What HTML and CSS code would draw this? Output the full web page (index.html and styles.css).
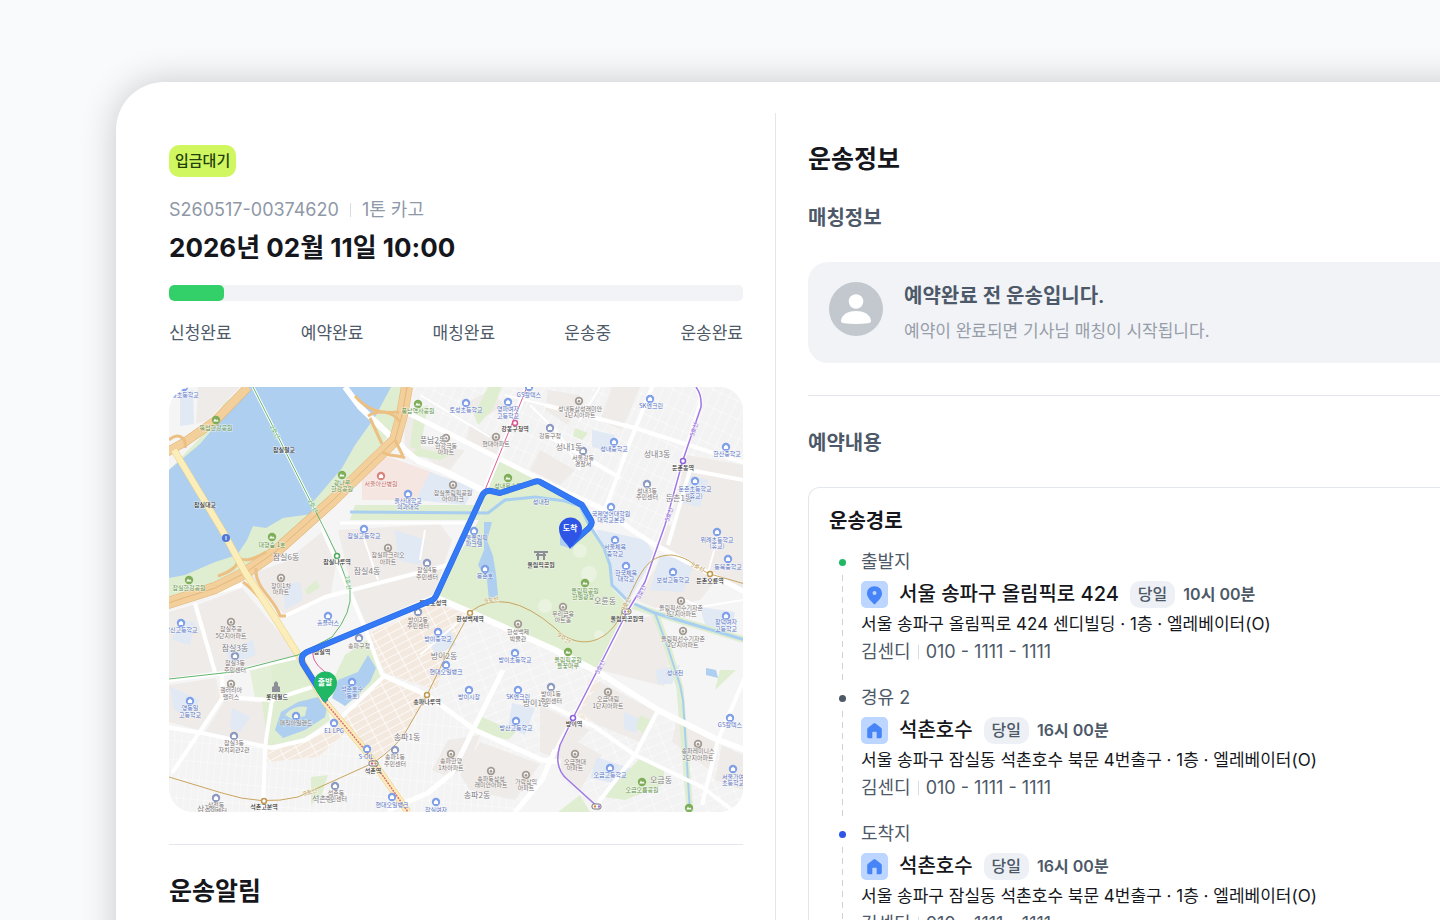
FILE: index.html
```html
<!DOCTYPE html>
<html lang="ko">
<head>
<meta charset="utf-8">
<meta name="viewport" content="width=device-width, initial-scale=1">
<title>운송정보</title>
<link rel="stylesheet" href="styles.css">
</head>
<body>
<svg width="0" height="0" class="defs" aria-hidden="true">
  <symbol id="ic-pin" viewBox="0 0 27 27"><path d="M13.500 5.200c-4.200 0-7.500 3.100-7.500 7.200 0 4.300 4 7.300 6.700 10.500.4.500 1.200.5 1.600 0 2.700-3.200 6.700-6.200 6.700-10.500 0-4.100-3.300-7.200-7.500-7.200z" fill="#4684f7"/><circle cx="13.500" cy="12" r="2" fill="#bcd6ff"/></symbol>
  <symbol id="ic-home" viewBox="0 0 27 27"><path d="M12.500 6.600 7 10.700c-.5.400-.8.900-.8 1.500v7.600c0 .9.600 1.400 1.400 1.400h3.700v-5.400c0-.6.400-1 1-1h2.400c.6 0 1 .4 1 1v5.400h3.700c.8 0 1.400-.5 1.400-1.400v-7.600c0-.6-.3-1.100-.8-1.500l-5.500-4.100c-.6-.5-1.400-.5-2 0z" fill="#4684f7"/></symbol>
  <symbol id="poi" viewBox="0 0 10 10" overflow="visible"><circle cx="5" cy="5" r="4.200"/><path d="M5 2.700 2.900 4.500v2.600h4.200V4.500z" fill="#fff"/></symbol>
  <symbol id="apt" viewBox="0 0 10 10" overflow="visible"><circle cx="5" cy="5" r="4.200"/><circle cx="5" cy="5" r="2.400" fill="#fff"/><path d="M5 3.400 3.600 4.700v1.800h2.800V4.700z" fill="#a29a92"/></symbol>
  <symbol id="tree" viewBox="0 0 10 10" overflow="visible"><circle cx="5" cy="5" r="4.200"/><path d="M2.300 6.500 4 3.500l1.200 2 .9-1.200 1.600 2.200z" fill="#fff"/></symbol>
</svg>
<main class="card">
  <section class="pane summary">
    <span class="badge">입금대기</span>
    <p class="meta"><span>S260517-00374620</span><i class="bar"></i><span>1톤 카고</span></p>
    <h1 class="date">2026년 02월 11일 10:00</h1>
    <progress class="progress" value="96" max="1000" aria-label="운송 진행"></progress>
    <ol class="steps"><li>신청완료</li><li>예약완료</li><li>매칭완료</li><li>운송중</li><li>운송완료</li></ol>

    <svg class="map" viewBox="169 387 574 425" preserveAspectRatio="xMidYMid slice" role="img" aria-label="운송 경로 지도">
      <defs>
        <pattern id="g1" width="16" height="9" patternUnits="userSpaceOnUse" patternTransform="rotate(-22)"><rect width="16" height="9" fill="#f4f3f3"/><path d="M0 0H16M0 0V9" stroke="#e4e3e3" stroke-width="2"/><path d="M0 0H16M0 0V9" stroke="#fff" stroke-width="1.500"/></pattern>
        <pattern id="g2" width="15" height="7" patternUnits="userSpaceOnUse" patternTransform="rotate(-28)"><rect width="15" height="7" fill="#f3e9df"/><path d="M0 0H15M0 0V7" stroke="#fff" stroke-width="1.500"/></pattern>
        <pattern id="g3" width="9" height="17" patternUnits="userSpaceOnUse" patternTransform="rotate(25)"><rect width="9" height="17" fill="#f4f3f3"/><path d="M0 0H9M0 0V17" stroke="#e4e3e3" stroke-width="2"/><path d="M0 0H9M0 0V17" stroke="#fff" stroke-width="1.500"/></pattern>
        <pattern id="g4" width="7" height="19" patternUnits="userSpaceOnUse" patternTransform="rotate(5)"><rect width="7" height="19" fill="#f5f4f4"/><path d="M0 0H7M0 0V19" stroke="#e6e5e5" stroke-width="2"/><path d="M0 0H7M0 0V19" stroke="#fff" stroke-width="1.500"/></pattern>
      </defs>
      <rect x="169" y="387" width="574" height="425" fill="#f5f5f5"/>

      <g>
        <path d="M408 387H743V590L632 530 605 510 555 487 502 460 408 413z" fill="url(#g3)"/>
        <path d="M169 727 265 748 305 740 338 720 382 678 427 695 475 730 542 760 515 812H169z" fill="url(#g4)"/>
        <path d="M367 628 436 600 470 612 555 650 598 672 570 718 558 765 475 730 427 695 385 673z" fill="url(#g1)"/>
        <path d="M598 672 658 710 743 750V812H597L560 778 573 718z" fill="url(#g1)"/>
        <path d="M400 620 430 603 465 613 448 656 436 690 385 673 367 634z" fill="url(#g2)"/>
        <path d="M340 722 385 677 427 696 405 733 375 762z" fill="url(#g2)"/>
        <path d="M268 748 305 742 338 724 345 733 318 757 267 762zM590 678 608 686 588 722 574 716z" fill="url(#g2)"/>
      </g>
      <g fill="#efebe8">
        <path d="M195 606 242 588 298 655 232 671 216 672zM247 575 285 562 322 532 338 553 330 597 284 614zM338 530 440 524 452 540 434 594 366 624 352 590z"/>
        <path d="M198 387 240 387 208 420 196 424zM404 420 418 410 415 465 405 448zM410 445 465 450 450 470 440 468zM470 425 505 442 497 458 465 445zM463 405 490 390 505 405 480 420z"/>
        <path d="M169 612 193 605 213 672 169 678zM169 685 216 678 220 698 202 731 169 722zM225 700 270 703 264 745 205 732z"/>
        <path d="M686 455 743 465V588L668 545zM640 387 622 430 600 420 612 387zM548 390 580 395 568 425 545 410zM540 450 575 470 560 485 530 470z"/>
        <path d="M665 525 743 530V590L656 545zM660 560 720 575 700 600 655 608 636 600zM618 622 658 615 678 690 600 670zM600 682 657 712 640 742 598 725 580 712z"/>
        <path d="M448 740 480 735 470 762 450 778 432 770zM480 742 540 764 515 800 470 790 460 775zM565 735 602 755 580 790 560 772zM680 705 717 740 710 770 672 742z"/>
        <path d="M540 705 590 730 560 760 540 752zM722 745 743 755V790L715 780z"/>
      </g>
      <path d="M678 618 743 642V676L718 738 660 708z" fill="#f5f5f5"/>
      <path d="M362 480 378 455 392 458 434 473 415 500 362 500z" fill="#f5e6e1"/>
      <g fill="#e1e9f4">
        <path d="M180 392 193 390 194 424 180 426zM430 472 475 488 465 505 416 500zM592 430 615 435 612 452 592 447zM283 585 300 582 303 600 285 610zM225 650 253 640 256 655 232 664zM180 620 195 622 190 645 172 640z"/>
        <path d="M600 530 645 540 655 555 628 602 614 588 608 555 596 530zM660 555 695 562 683 592 650 590zM700 607 735 612 730 635 706 628zM597 757 635 770 622 785 590 778zM624 712 642 720 636 733 624 729z"/>
        <path d="M232 708 250 717 240 732 230 728zM512 703 535 708 525 735 508 728zM688 475 708 480 700 507 680 503zM428 640 450 628 456 645 436 655zM395 530 425 540 420 565 398 560zM655 670 680 665 672 684 658 684zM170 687 200 700 190 715 174 710z"/>
      </g>
      <g fill="#dfedd0">
        <path d="M169 470 200 438 225 402 248 387H410L400 420 372 458 331 503 297 528 245 570 215 585 169 603z"/>
        <path d="M435 596 480 518 483 492 500 461 555 488 588 507 594 530 608 552 612 588 629 606 598 671 555 651 470 612z"/>
        <path d="M262 702 271 665 300 658 326 690 345 706 366 690 382 676 367 640 345 655 333 680 326 700 330 720 305 738 268 746z"/>
        <path d="M355 505H480V520H350zM415 410 428 405 420 450 410 447zM440 460 410 455 418 448 450 455zM488 387H502L492 410 478 425 474 415z"/>
        <path d="M473 730 482 717 516 732 508 740zM311 777 328 775 322 795 311 805zM640 758 665 768 662 785 625 800 603 797zM558 812 580 795 590 812zM575 428 588 433 582 440 573 436zM720 670 736 670 715 690zM305 590 316 580 320 587 308 595zM640 715 650 720 643 733 636 728z"/>
      </g>
      <path d="M250 671 271 665 274 700 255 698z" fill="#e4efd8"/>
      <g fill="#aecff0">
        <path d="M169 470 200 444 222 418 249 387H391L375 417 355 445 342 468 313 502 312 514 283 518 266 528 253 526 247 540 237 555 215 562 185 575 169 578z"/>
        <path d="M275 730 281 712 298 702 318 697 327 707 325 717 305 730 283 738z"/>
        <path d="M332 698 338 680 358 672 368 655 376 668 370 682 355 697 345 706z"/>
        <path d="M484 522 492 522 487 540 493 556 496 574 498 595 489 600 487 580 478 565 484 550z"/>
        <path d="M560 535 578 540 572 549 560 545zM706 668 716 670 718 678 706 675z"/>
      </g>
      <path d="M285 715c5-7 15-10 22-8l-2 9-13 3z" fill="#dfedd0"/>
      <g fill="#e9f3df"><circle cx="580" cy="551" r="7"/><circle cx="589" cy="574" r="8"/><circle cx="545" cy="606" r="7"/><circle cx="599" cy="635" r="5"/></g>
      <g fill="none" stroke="#dfedd0" stroke-width="7"><path d="M628 604 655 613 695 625 745 640M655 613 668 648 680 688 690 812"/></g>
      <g fill="none" stroke="#a9cff0" stroke-width="3">
        <path d="M350 512 488 513 505 500 535 497 565 501 580 506 588 523 604 548 610 565 612 585 628 601 655 613 695 625 745 640"/>
        <path d="M655 613 668 648 680 685 683 700 690 812" stroke-width="2"/>
      </g>

      <g fill="none" stroke="#fff" stroke-linejoin="round">
        <path d="M345 387 360 407 405 450 418 461 442 470 482 490" stroke-width="6"/>
        <path d="M408 413 502 460 555 487 605 510 632 530 655 545 745 592" stroke-width="5"/>
        <path d="M435 597 470 612 555 650 598 672 658 710 718 740 745 750" stroke-width="6"/>
        <path d="M527 387 485 490 435 597 367 628 298 655" stroke-width="5"/>
        <path d="M697 387 701 400 683 460 665 525 645 582 627 612 597 672 573 718 547 767" stroke-width="4"/>
        <path d="M652 387 628 447 605 510M545 405 635 428 745 463M545 435 570 448 620 478" stroke-width="4"/>
        <path d="M169 605 242 585M195 603 215 672M283 617 325 597 448 565M322 528 350 592 365 628 382 675" stroke-width="4"/>
        <path d="M382 675 427 695 475 730 542 760 560 762M503 670 473 730 452 773 428 793 388 810M555 750 542 780 515 812" stroke-width="5"/>
        <path d="M165 727 202 733 272 748 305 740 338 720 365 695 384 676M222 675 223 697 172 773M223 697 272 700 312 687M272 700 265 747 263 812M169 680 232 672 298 657" stroke-width="4"/>
        <path d="M545 703 595 727 635 755 702 787 732 810M658 710 635 755 598 803M745 677 718 740 702 805M668 545 690 470 743 480" stroke-width="4"/>
        <path d="M530 405 560 435 580 470M505 395 545 405M420 395 490 437M600 387 580 420M685 600 700 607 743 600M720 530 708 572M425 530 420 560M362 533 378 580M420 655 470 612" stroke-width="2"/>
        <path d="M340 523H465" stroke-width="3"/>
        <path d="M253 387 325 530" stroke-width="3"/>
      </g>
      <g fill="none" stroke-linejoin="round">
        <g stroke="#e2b578">
          <path d="M248 387 215 421 185 442 165 453" stroke-width="9"/>
          <path d="M407 387 402 415 395 440 366 468 332 501 303 527 275 552 245 573 215 588 165 604" stroke-width="12"/>
        </g>
        <g stroke="#f2cf9b">
          <path d="M248 387 215 421 185 442 165 453" stroke-width="8"/>
          <path d="M407 387 402 415 395 440 366 468 332 501 303 527 275 552 245 573 215 588 165 604" stroke-width="11"/>
        </g>
        <path d="M407 387 402 415 395 440 366 468 332 501 303 527 275 552 245 573 215 588 165 604" stroke="#e3b77b" stroke-width="1"/>
        <g stroke="#ecc083" stroke-width="3">
          <path d="M355 396c12 14 24 18 44 16M368 416c10-6 24-6 32 6M370 418l12 26M383 452c4 5 14 2 22 6M395 440l8 16M169 440c8-8 18-3 16 8M238 560c0 6-8 12-20 16M236 556c8 8 20 2 30-4M256 568c-2 20 20 32 24 48h6M243 582c14 10 20 22 32 33"/>
        </g>
        <path d="M174 450 222 530 245 572 275 618 299 656 325 702 365 750 408 812" stroke="#ead183" stroke-width="7"/>
        <path d="M174 450 222 530 245 572 275 618 299 656 325 702 365 750 408 812" stroke="#fbeebb" stroke-width="6"/>
        <path d="M325 702 365 750 408 812" stroke="#e06a7c" stroke-width="1.500" stroke-dasharray="2 1"/>
        <path d="M253 387 325 530 337 555 350 590Q353 612 332 637L298 655 232 672 169 679" stroke="#62b56c" stroke-width="1"/>
        <path d="M527 387 485 490" stroke="#dc5f95" stroke-width="1"/>
        <path d="M325 672Q309 660 314 648" stroke="#dc5f95" stroke-width="1"/>
        <path d="M696 387Q702 395 701 407L683 460 665 525 645 582 627 612 595 675 573 718 560 745Q553 768 568 780L600 809" stroke="#a077e4" stroke-width="1.500"/>
        <path d="M169 777 222 793Q262 806 298 797L373 763Q395 748 405 733L427 695 445 658 470 612Q505 585 555 628C578 652 612 645 625 605 640 575 645 555 672 555 692 558 695 568 710 574L745 584" stroke="#c8a55e" stroke-width="1"/>
      </g>

      <g class="stop-dots" fill="#fff" stroke-width="1.500">
        <circle cx="515" cy="423" r="2.500" stroke="#d6578f"/><circle cx="683" cy="461" r="2.500" stroke="#8d62d8"/><circle cx="573" cy="718" r="2.500" stroke="#8d62d8"/>
        <circle cx="337" cy="556" r="2.500" stroke="#4fab5a"/><circle cx="470" cy="613" r="2.500" stroke="#bd9a50"/><circle cx="427" cy="695" r="2.500" stroke="#bd9a50"/><circle cx="264" cy="801" r="2.500" stroke="#bd9a50"/><circle cx="710" cy="574" r="2.500" stroke="#bd9a50"/>
        <g stroke="#777" stroke-width="1"><rect x="622" y="609" width="9" height="5" rx="2"/><rect x="369" y="761" width="9" height="5" rx="2"/><rect x="592" y="804" width="9" height="5" rx="2"/></g>
      </g>
      <g fill="#a077e4"><circle cx="625" cy="611.500" r="1.200"/><circle cx="372" cy="763.500" r="1.200" fill="#d6578f"/><circle cx="599" cy="806.500" r="1.200"/></g>
      <g fill="#bd9a50"><circle cx="628.500" cy="611.500" r="1.200"/><circle cx="375.500" cy="763.500" r="1.200"/><circle cx="595" cy="806.500" r="1.200" fill="#e08a3c"/></g>
      <circle cx="226" cy="538" r="4" fill="#4f78d8"/><path d="M226 536v4" stroke="#fff"/>
      <path d="M534 552h14M536 555h10M538 552v8M544 552v8" stroke="#8e8e98" stroke-width="2" fill="none"/>
      <path d="M272 692v-5l2-1v-3l2-2 2 2v3l2 1v5z" fill="#8e8e98"/>

      <g fill="#7fae5a">
        <use href="#tree" x="211" y="415" width="10" height="10"/><use href="#tree" x="337" y="470" width="10" height="10"/><use href="#tree" x="413" y="399" width="10" height="10"/><use href="#tree" x="503" y="473" width="10" height="10"/><use href="#tree" x="267" y="532" width="10" height="10"/><use href="#tree" x="184" y="575" width="10" height="10"/><use href="#tree" x="580" y="578" width="10" height="10"/><use href="#tree" x="563" y="647" width="10" height="10"/><use href="#tree" x="637" y="777" width="10" height="10"/><use href="#tree" x="684" y="803" width="10" height="10"/>
      </g>
      <g fill="#a29a92">
        <use href="#apt" x="441" y="433" width="10" height="10"/><use href="#apt" x="491" y="432" width="10" height="10"/><use href="#apt" x="448" y="480" width="10" height="10"/><use href="#apt" x="574" y="396" width="10" height="10"/><use href="#apt" x="276" y="573" width="10" height="10"/><use href="#apt" x="226" y="617" width="10" height="10"/><use href="#apt" x="383" y="543" width="10" height="10"/><use href="#apt" x="513" y="619" width="10" height="10"/><use href="#apt" x="558" y="602" width="10" height="10"/><use href="#apt" x="676" y="596" width="10" height="10"/><use href="#apt" x="678" y="626" width="10" height="10"/><use href="#apt" x="226" y="679" width="10" height="10"/><use href="#apt" x="446" y="749" width="10" height="10"/><use href="#apt" x="486" y="766" width="10" height="10"/><use href="#apt" x="521" y="770" width="10" height="10"/><use href="#apt" x="603" y="687" width="10" height="10"/><use href="#apt" x="570" y="749" width="10" height="10"/><use href="#apt" x="693" y="739" width="10" height="10"/>
      </g>
      <g fill="#7f9fe8">
        <use href="#poi" x="179" y="382" width="10" height="10"/><use href="#poi" x="524" y="382" width="10" height="10"/><use href="#poi" x="461" y="398" width="10" height="10"/><use href="#poi" x="503" y="397" width="10" height="10"/><use href="#poi" x="403" y="489" width="10" height="10"/><use href="#poi" x="645" y="394" width="10" height="10"/><use href="#poi" x="609" y="437" width="10" height="10"/><use href="#poi" x="721" y="442" width="10" height="10"/><use href="#poi" x="690" y="476" width="10" height="10"/><use href="#poi" x="606" y="502" width="10" height="10"/><use href="#poi" x="359" y="524" width="10" height="10"/><use href="#poi" x="469" y="526" width="10" height="10"/><use href="#poi" x="480" y="564" width="10" height="10"/><use href="#poi" x="323" y="611" width="10" height="10"/><use href="#poi" x="176" y="618" width="10" height="10"/><use href="#poi" x="433" y="627" width="10" height="10"/><use href="#poi" x="510" y="648" width="10" height="10"/><use href="#poi" x="441" y="660" width="10" height="10"/><use href="#poi" x="610" y="535" width="10" height="10"/><use href="#poi" x="621" y="561" width="10" height="10"/><use href="#poi" x="668" y="567" width="10" height="10"/><use href="#poi" x="712" y="527" width="10" height="10"/><use href="#poi" x="723" y="554" width="10" height="10"/><use href="#poi" x="721" y="611" width="10" height="10"/><use href="#poi" x="185" y="696" width="10" height="10"/><use href="#poi" x="291" y="711" width="10" height="10"/><use href="#poi" x="347" y="677" width="10" height="10"/><use href="#poi" x="329" y="718" width="10" height="10"/><use href="#poi" x="362" y="744" width="10" height="10"/><use href="#poi" x="464" y="685" width="10" height="10"/><use href="#poi" x="513" y="685" width="10" height="10"/><use href="#poi" x="511" y="716" width="10" height="10"/><use href="#poi" x="387" y="792" width="10" height="10"/><use href="#poi" x="431" y="797" width="10" height="10"/><use href="#poi" x="605" y="763" width="10" height="10"/><use href="#poi" x="725" y="713" width="10" height="10"/><use href="#poi" x="728" y="764" width="10" height="10"/>
      </g>
      <g fill="#8c9ac0">
        <use href="#poi" x="545" y="423" width="10" height="10"/><use href="#poi" x="578" y="446" width="10" height="10"/><use href="#poi" x="642" y="479" width="10" height="10"/><use href="#poi" x="422" y="558" width="10" height="10"/><use href="#poi" x="413" y="607" width="10" height="10"/><use href="#poi" x="354" y="633" width="10" height="10"/><use href="#poi" x="230" y="651" width="10" height="10"/><use href="#poi" x="229" y="731" width="10" height="10"/><use href="#poi" x="211" y="793" width="10" height="10"/><use href="#poi" x="330" y="781" width="10" height="10"/><use href="#poi" x="390" y="745" width="10" height="10"/><use href="#poi" x="546" y="682" width="10" height="10"/>
      </g>
      <g fill="#d9847c"><use href="#poi" x="376" y="471" width="10" height="10"/></g>

      <g class="lb lb-area"><text x="433" y="443">풍남2동</text><text x="569" y="450">성내1동</text><text x="657" y="457">성내3동</text><text x="679" y="501">둔촌1동</text><text x="286" y="560">잠실6동</text><text x="367" y="574">잠실4동</text><text x="235" y="651">잠실3동</text><text x="444" y="659">방이2동</text><text x="605" y="604">오륜동</text><text x="407" y="740">송파1동</text><text x="536" y="706">방이1동</text><text x="477" y="798">송파2동</text><text x="661" y="783">오금동</text><text x="323" y="802">석촌동</text><text x="208" y="812">삼전동</text></g>
      <g class="lb lb-stn"><text x="284" y="452">잠실철교</text><text x="205" y="507">잠실대교</text><text x="515" y="431">강동구청역</text><text x="683" y="470">둔촌동역</text><text x="337" y="564">잠실나루역</text><text x="541" y="567">올림픽공원</text><text x="433" y="605">몽촌토성역</text><text x="470" y="621">한성백제역</text><text x="627" y="621">올림픽공원역</text><text x="710" y="583">둔촌오륜역</text><text x="322" y="654">잠실역</text><text x="277" y="699">롯데월드</text><text x="427" y="704">송파나루역</text><text x="574" y="726">방이역</text><text x="373" y="773">석촌역</text><text x="264" y="809">석촌고분역</text></g>
      <g class="lb lb-park"><text x="216" y="430">뚝섬한강공원</text><text x="342" y="485">광나루</text><text x="342" y="491">한강공원</text><text x="418" y="413">풍납역사공원</text><text x="508" y="488">성내유수지</text><text x="272" y="547">대형숲 1호</text><text x="189" y="590">잠실한강공원</text><text x="585" y="593">올림픽공원</text><text x="583" y="599">한얼광장</text><text x="568" y="662">올림픽공원</text><text x="568" y="668">들꽃마루</text><text x="642" y="792">오금오름공원</text></g>
      <g class="lb lb-blue"><text x="185" y="397">동초등학교</text><text x="466" y="412">토성초등학교</text><text x="508" y="411">영파여자</text><text x="508" y="418">고등학교</text><text x="529" y="397">GS칼텍스</text><text x="408" y="503">울산대학교</text><text x="408" y="509">의과대학</text><text x="651" y="408">SK엔크린</text><text x="614" y="451">성내중학교</text><text x="727" y="456">한산중학교</text><text x="695" y="491">둔촌초등학교</text><text x="695" y="498">(휴교)</text><text x="611" y="516">국제영어대학원</text><text x="611" y="522">대학교본관</text><text x="364" y="538">잠실고등학교</text><text x="474" y="540">서울올림픽</text><text x="474" y="546">파크텔</text><text x="485" y="578">몽촌호</text><text x="328" y="625">홈플러스</text><text x="181" y="632">잠신고등학교</text><text x="438" y="641">방이중학교</text><text x="515" y="662">방이초등학교</text><text x="446" y="674">현대오일뱅크</text><text x="615" y="549">서울체육</text><text x="615" y="556">중학교</text><text x="626" y="575">한국체육</text><text x="626" y="581">대학교</text><text x="673" y="582">보성고등학교</text><text x="717" y="542">위례초등학교</text><text x="717" y="548">(휴교)</text><text x="728" y="569">동북중학교</text><text x="726" y="624">창덕여자</text><text x="726" y="631">고등학교</text><text x="675" y="675">성내천</text><text x="541" y="504">성내천</text><text x="190" y="710">영동일</text><text x="190" y="717">고등학교</text><text x="352" y="691">석촌호수</text><text x="352" y="698">(동호)</text><text x="334" y="733">E1 LPG</text><text x="366" y="759">S-OIL</text><text x="469" y="699">방이시장</text><text x="518" y="699">SK엔크린</text><text x="516" y="730">방산고등학교</text><text x="392" y="807">현대오일뱅크</text><text x="436" y="812">잠실여자</text><text x="610" y="777">오금고등학교</text><text x="730" y="727">GS칼텍스</text><text x="733" y="779">서울가여</text><text x="733" y="785">초등학교</text></g>
      <g class="lb lb-gray"><text x="296" y="725">매직아일랜드</text><text x="446" y="448">한강극동</text><text x="446" y="454">아파트</text><text x="496" y="446">현대아파트</text><text x="453" y="495">잠실올림픽공원</text><text x="453" y="501">아이파크</text><text x="580" y="411">성내동삼성래미안</text><text x="580" y="417">1단지아파트</text><text x="550" y="438">강동구청</text><text x="583" y="460">서울강동</text><text x="583" y="466">경찰서</text><text x="647" y="493">성내3동</text><text x="647" y="499">주민센터</text><text x="281" y="588">장미1차</text><text x="281" y="594">아파트</text><text x="231" y="631">잠실주공</text><text x="231" y="638">5단지아파트</text><text x="388" y="557">잠실파크리오</text><text x="388" y="564">아파트</text><text x="427" y="572">잠실4동</text><text x="427" y="579">주민센터</text><text x="418" y="622">방이2동</text><text x="418" y="628">주민센터</text><text x="359" y="648">송파구청</text><text x="518" y="634">한성백제</text><text x="518" y="641">박물관</text><text x="563" y="616">우리금융</text><text x="563" y="622">아트홀</text><text x="681" y="610">올림픽선수기자촌</text><text x="681" y="616">3단지아파트</text><text x="683" y="641">올림픽선수기자촌</text><text x="683" y="647">2단지아파트</text><text x="235" y="665">잠실3동</text><text x="235" y="672">주민센터</text><text x="231" y="692">갤러리아</text><text x="231" y="699">팰리스</text><text x="234" y="745">잠실3동</text><text x="234" y="752">자치회관2관</text><text x="336" y="795">석촌동</text><text x="336" y="801">주민센터</text><text x="216" y="807">삼전동</text><text x="216" y="813">주민센터</text><text x="395" y="759">송파1동</text><text x="395" y="766">주민센터</text><text x="451" y="763">송파한양</text><text x="451" y="770">1차아파트</text><text x="491" y="781">송파동삼성</text><text x="491" y="787">래미안아파트</text><text x="526" y="784">가락삼익</text><text x="526" y="790">아파트</text><text x="608" y="701">오금대림</text><text x="608" y="708">1단지아파트</text><text x="551" y="696">방이1동</text><text x="551" y="703">주민센터</text><text x="575" y="764">오금현대</text><text x="575" y="770">아파트</text><text x="698" y="753">송파레미니스</text><text x="698" y="760">2단지아파트</text></g>
      <g class="lb lb-red"><text x="381" y="486">서울아산병원</text></g>
      <g class="lb lb-line2"><text transform="translate(273 433) rotate(63)">2호선</text><text transform="translate(311 507) rotate(63)">2호선</text><text transform="translate(346 583) rotate(80)">2호선</text></g>
      <g class="lb lb-line5"><text transform="translate(696 430) rotate(-72)">5호선</text><text transform="translate(671 515) rotate(-72)">5호선</text><text transform="translate(643 593) rotate(-62)">5호선</text><text transform="translate(602 668) rotate(-62)">5호선</text></g>
      <g class="lb lb-line9"><text transform="translate(492 602) rotate(-10)">9호선</text><text transform="translate(563 640) rotate(35)">9호선</text><text transform="translate(628 605) rotate(-60)">9호선</text><text transform="translate(697 569) rotate(25)">9호선</text><text transform="translate(311 794) rotate(-15)">9호선</text></g>

      <g fill="none" stroke-linejoin="round" stroke-linecap="round">
        <path d="M325 699 303 664Q299 656 307 652L430 601Q434 600 436 596L482 496Q485 490 491 491L500 493 534 482Q538 480 542 483L582 505 591 520Q593 524 589 528L571 544" stroke="#2b69dc" stroke-width="6"/>
        <path d="M325 699 303 664Q299 656 307 652L430 601Q434 600 436 596L482 496Q485 490 491 491L500 493 534 482Q538 480 542 483L582 505 591 520Q593 524 589 528L571 544" stroke="#3479f6" stroke-width="5"/>
      </g>
      <path d="M570 549C567 543 559 538 559 529a11.500 11.500 0 0 1 23 0C582 538 573 543 570 549z" fill="#2f55e6"/>
      <path d="M325 703C322 697 314 692 314 683a11.500 11.500 0 0 1 23 0C337 692 328 697 325 703z" fill="#20b765"/>
      <g class="pin-text"><text x="570" y="531">도착</text><text x="325" y="685">출발</text></g>
    </svg>

    <hr class="rule">
    <h2 class="title">운송알림</h2>
  </section>

  <section class="pane info">
    <h2 class="title">운송정보</h2>
    <h3 class="sub">매칭정보</h3>
    <div class="notice">
      <svg class="avatar" viewBox="0 0 54 54" aria-hidden="true"><circle cx="27" cy="27" r="27" fill="#c2c8ce"/><circle cx="27" cy="19.500" r="7.300" fill="#fff"/><path d="M12 38.500c1-6.500 8-9.500 15-9.500s14 3 15 9.500c.2 1.700-1 2.500-3 2.800-7.500 1-16.500 1-24 0-2-.3-3.200-1.100-3-2.800z" fill="#fff"/></svg>
      <div>
        <p class="notice-title">예약완료 전 운송입니다.</p>
        <p class="notice-text">예약이 완료되면 기사님 매칭이 시작됩니다.</p>
      </div>
    </div>
    <hr class="rule">
    <h3 class="sub">예약내용</h3>
    <article class="route">
      <h4 class="route-title">운송경로</h4>
      <ol class="stops">
        <li class="stop start">
          <p class="label">출발지</p>
          <div class="place"><svg class="ic" aria-hidden="true"><use href="#ic-pin"/></svg><strong>서울 송파구 올림픽로 424</strong><span class="pill">당일</span><time>10시 00분</time></div>
          <p class="addr">서울 송파구 올림픽로 424 센디빌딩 · 1층 · 엘레베이터(O)</p>
          <p class="contact"><span>김센디</span><i class="bar"></i><span>010 - 1111 - 1111</span></p>
        </li>
        <li class="stop via">
          <p class="label">경유 2</p>
          <div class="place"><svg class="ic" aria-hidden="true"><use href="#ic-home"/></svg><strong>석촌호수</strong><span class="pill">당일</span><time>16시 00분</time></div>
          <p class="addr">서울 송파구 잠실동 석촌호수 북문 4번출구 · 1층 · 엘레베이터(O)</p>
          <p class="contact"><span>김센디</span><i class="bar"></i><span>010 - 1111 - 1111</span></p>
        </li>
        <li class="stop end">
          <p class="label">도착지</p>
          <div class="place"><svg class="ic" aria-hidden="true"><use href="#ic-home"/></svg><strong>석촌호수</strong><span class="pill">당일</span><time>16시 00분</time></div>
          <p class="addr">서울 송파구 잠실동 석촌호수 북문 4번출구 · 1층 · 엘레베이터(O)</p>
          <p class="contact"><span>김센디</span><i class="bar"></i><span>010 - 1111 - 1111</span></p>
        </li>
      </ol>
    </article>
  </section>
</main>
</body>
</html>
```
FILE: styles.css
```css
* { box-sizing: border-box; }
body {
  margin: 0;
  height: 100vh;
  overflow: hidden;
  background: #f8fafc;
  color: #15171c;
  font-family: Inter, "Noto Sans CJK KR", sans-serif;
  font-size: 18px;
  line-height: 28px;
}
h1, h2, h3, h4, p, ol { margin: 0; padding: 0; }
ol { list-style: none; }
.defs { display: block; width: 0; height: 0; }

.card {
  display: grid;
  grid-template-columns: 165fr 181fr;
  margin: 82px -60px 0 116px;
  padding-top: 31px;
  min-height: 100vh;
  background: #fff;
  border-radius: 48px 0 0 0;
  box-shadow: 0 0 36px rgba(0, 0, 0, 0.2);
}
.pane { min-width: 0; display: flex; flex-direction: column; padding-top: 28px; }
.summary { padding-left: 53px; padding-right: 32px; border-right: 1px solid #e3e6ea; padding-top: 32px; }
.info { padding-left: 32px; }

.badge {
  align-self: flex-start;
  padding: 0 6px;
  border-radius: 10px;
  background: #d0f760;
  color: #22400c;
  font-size: 15px;
  font-weight: 500;
  line-height: 32px;
}
.meta { display: flex; align-items: center; gap: 11px; margin-top: 19px; color: #8f98a6; }
.bar { width: 1px; height: 14px; background: #d9dde3; }
.date { margin-top: 6px; font-size: 26px; font-weight: 700; line-height: 36px; }
.progress {
  appearance: none;
  display: block;
  width: 100%;
  height: 16px;
  margin-top: 19px;
  border: 0;
  border-radius: 5px;
  overflow: hidden;
  background: #f1f3f6;
}
.progress::-webkit-progress-bar { background: #f1f3f6; border-radius: 5px; }
.progress::-webkit-progress-value { background: #33d06a; border-radius: 5px; }
.steps { display: flex; justify-content: space-between; margin-top: 18px; color: #4d5968; font-size: 17px; }
.map { display: block; width: 100%; aspect-ratio: 574 / 425; margin-top: 40px; border-radius: 24px; }
.rule { width: 100%; height: 1px; margin: 32px 0 0; border: 0; background: #e3e6ea; flex: none; }
.title { font-size: 25px; font-weight: 700; line-height: 36px; }
.summary .title { margin-top: 28px; }

.sub { margin-top: 27px; color: #4d5968; font-size: 20px; font-weight: 600; line-height: 28px; }
.notice {
  display: flex;
  align-items: flex-start;
  gap: 21px;
  margin-top: 30px;
  padding: 20px 21px 18px;
  border-radius: 20px 0 0 20px;
  background: #f1f3f6;
}
.avatar { width: 54px; height: 54px; flex: none; }
.notice-title { color: #4d5968; font-size: 20px; font-weight: 600; }
.notice-text { margin-top: 7px; color: #979eaa; font-size: 17px; }
.info .rule + .sub { margin-top: 33px; }

.route { margin-top: 30px; padding: 19px 20px; border: 1px solid #e3e6ea; border-right: 0; border-radius: 12px 0 0 0; }
.route-title { font-size: 20px; font-weight: 700; }
.stop { position: relative; padding: 0 0 18px 32px; }
.stops { padding-top: 13px; }
.stop::before {
  content: "";
  position: absolute;
  left: 10px;
  top: 11px;
  width: 7px;
  height: 7px;
  border-radius: 50%;
  background: #4d5968;
}
.stop::after {
  content: "";
  position: absolute;
  left: 13px;
  top: 27px;
  bottom: -1px;
  width: 1px;
  background: repeating-linear-gradient(#cdd2d8 0 6px, transparent 6px 11px);
}
.start::before { background: #20b765; }
.end::before { background: #2f55e6; }
.label { color: #4d5968; }
.place { display: flex; align-items: center; gap: 8px; margin-top: 4px; height: 28px; }
.ic { width: 27px; height: 27px; border-radius: 5px; background: #bcd6ff; }
.place strong { margin: 0 3px; font-size: 20px; font-weight: 500; }
.pill { padding: 0 8px; border-radius: 10px; background: #edf0f5; color: #4d5968; font-size: 16px; font-weight: 500; line-height: 27px; }
.place time { color: #4d5968; font-size: 16px; font-weight: 600; }
.addr { margin-top: 2px; font-size: 17px; }
.contact { display: flex; align-items: center; gap: 7px; color: #4d5968; }

.lb { font-family: "Noto Sans CJK KR", sans-serif; text-anchor: middle; paint-order: stroke; stroke: rgba(255, 255, 255, 0.7); stroke-width: 1px; font-size: 6px; }
.lb-area { font-size: 8px; fill: #7e7e84; }
.lb-stn { fill: #333; font-weight: 500; }
.lb-park { fill: #5c9146; }
.lb-blue { fill: #5572c4; }
.lb-gray { fill: #7a7372; }
.lb-red { fill: #c5665e; }
.lb-line2 { fill: #4fab5a; }
.lb-line5 { fill: #8d62d8; }
.lb-line9 { fill: #bd9a50; }
.pin-text { font-family: "Noto Sans CJK KR", sans-serif; font-size: 8px; font-weight: 700; fill: #fff; text-anchor: middle; }
```
